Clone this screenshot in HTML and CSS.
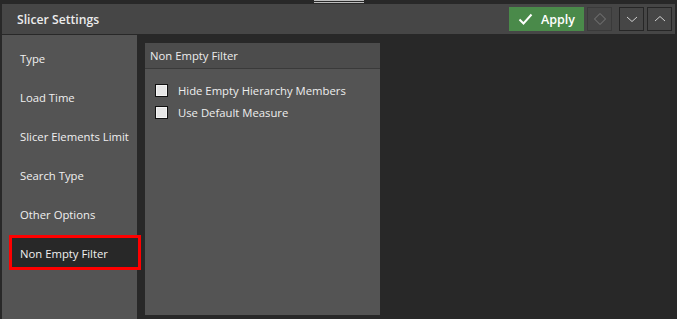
FILE: index.html
```html
<!DOCTYPE html>
<html lang="en">
<head>
  <meta charset="UTF-8">
  <title>Slicer Settings</title>
  <link rel="stylesheet" href="styles.css">
</head>
<body>
  <div class="grip-row"><div class="grip"></div></div>

  <div class="header">
    <span class="title">Slicer Settings</span>
    <div class="actions">
      <button class="apply">
        <svg width="15" height="12" viewBox="0 0 15 12"><path d="M1.5 6.5 L5.5 10.5 L13.5 1.5" fill="none" stroke="#fff" stroke-width="2"/></svg>
        Apply
      </button>
      <button class="icon-btn reset">
        <svg width="14" height="14" viewBox="0 0 14 14"><path d="M7 1.5 L12.5 7 L7 12.5 L1.5 7 Z" fill="none" stroke="#7a7a7a" stroke-width="1"/></svg>
      </button>
      <button class="icon-btn dark">
        <svg width="12" height="8" viewBox="0 0 12 8"><path d="M1 2 L6 6.5 L11 2" fill="none" stroke="#cfcfcf" stroke-width="1"/></svg>
      </button>
      <button class="icon-btn dark">
        <svg width="12" height="8" viewBox="0 0 12 8"><path d="M1 6 L6 1.5 L11 6" fill="none" stroke="#cfcfcf" stroke-width="1"/></svg>
      </button>
    </div>
  </div>

  <div class="main">
    <ul class="sidebar">
      <li>Type</li>
      <li>Load Time</li>
      <li>Slicer Elements Limit</li>
      <li>Search Type</li>
      <li>Other Options</li>
      <li class="active">Non Empty Filter</li>
    </ul>

    <div class="panel">
      <div class="panel-title">Non Empty Filter</div>
      <div class="panel-body">
        <label class="check"><span class="box"></span>Hide Empty Hierarchy Members</label>
        <label class="check"><span class="box"></span>Use Default Measure</label>
      </div>
    </div>
  </div>
</body>
</html>
```

FILE: styles.css
```css
body {
  margin: 0;
  background-color: #282828;
  font-family: "Open Sans", "Noto Sans", sans-serif;
  color: #eeeeee;
  height: 319px;
  overflow: hidden;
}

.grip-row {
  height: 4px;
}

.grip {
  margin-left: 314px;
  width: 50px;
  height: 1px;
  border-top: 1px solid #bdbdbd;
  border-bottom: 1px solid #bdbdbd;
}

.header {
  margin: 0 2px;
  height: 30px;
  background-color: #464646;
  display: flex;
  align-items: center;
  justify-content: space-between;
  padding-left: 15px;
  padding-right: 3px;
  box-sizing: border-box;
}

.title {
  font-size: 12.2px;
  font-weight: 600;
  color: #ececec;
}

.actions {
  display: flex;
  align-items: center;
}

.actions button {
  height: 24px;
  border: none;
  padding: 0;
  cursor: pointer;
  display: flex;
  align-items: center;
  justify-content: center;
}

.apply {
  width: 75px;
  background-color: #4a8a4a;
  color: #ffffff;
  font-family: "Open Sans", sans-serif;
  font-size: 12.5px;
  font-weight: 600;
  gap: 8px;
}

.icon-btn {
  width: 25px;
  background-color: #464646;
  box-sizing: border-box;
}

.reset {
  margin-left: 3px;
  border: 1px solid #3a3a3a !important;
}

.dark {
  border: 1px solid #262626 !important;
  margin-left: 3px;
}

.reset + .dark {
  margin-left: 7px;
}

.main {
  display: flex;
  margin-top: 1px;
}

.sidebar {
  list-style: none;
  margin: 0 0 0 2px;
  padding: 4px 0 0 0;
  width: 135px;
  height: 284px;
  box-sizing: border-box;
  background-color: #545454;
}

.sidebar li {
  height: 39px;
  display: flex;
  align-items: center;
  padding-left: 18px;
  font-size: 11.3px;
  color: #f0f0f0;
}

.sidebar li.active {
  height: 35px;
  width: 132px;
  margin: 1px 0 0 7px;
  padding: 1px 0 0 8px;
  box-sizing: border-box;
  border: 3px solid #ff0000;
  background-color: #282828;
}

.panel {
  margin: 8px 0 0 8px;
  width: 235px;
  height: 272px;
  background-color: #545454;
}

.panel-title {
  height: 26px;
  box-sizing: border-box;
  background-color: #4c4c4c;
  border-bottom: 1px solid #3a3a3a;
  padding-left: 5px;
  display: flex;
  align-items: center;
  font-size: 11.3px;
  color: #ececec;
}

.panel-body {
  padding: 14px 0 0 10px;
  display: flex;
  flex-direction: column;
  gap: 8px;
}

.check {
  display: flex;
  align-items: center;
  font-size: 11.3px;
  color: #eeeeee;
  height: 14px;
}

.box {
  width: 11px;
  height: 11px;
  border: 1px solid #111111;
  background-color: #e6e6e6;
  box-shadow: inset 0 0 0 1px #f4f4f4;
  margin-right: 10px;
}
```
